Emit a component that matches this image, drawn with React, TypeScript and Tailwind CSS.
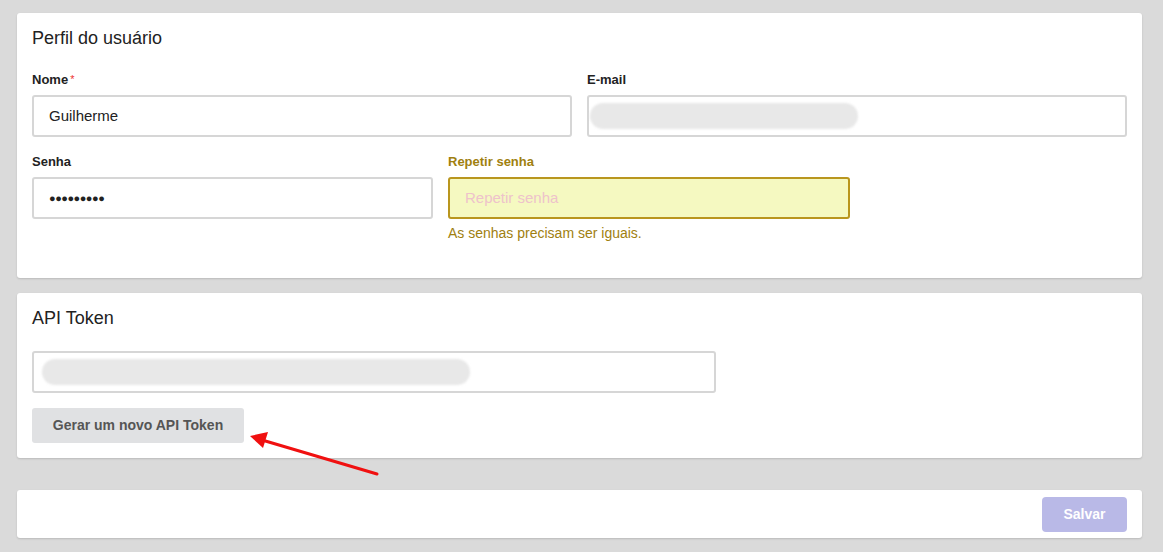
import React from 'react'

const font = { fontFamily: '"Liberation Sans", Arial, sans-serif' }

function Label({ children, required, warn }: { children: React.ReactNode; required?: boolean; warn?: boolean }) {
  return (
    <div className={`h-4 text-[13px] leading-4 font-bold mb-[7px] ${warn ? 'text-[#a0800f]' : 'text-[#222]'}`}>
      {children}
      {required && <sup className="text-[#e33] font-normal text-[11px] ml-[2px] relative top-[-1px]">*</sup>}
    </div>
  )
}

function Blurred({ width }: { width: string }) {
  return (
    <div className={`h-full flex items-center ${width}`}>
      <div className="w-full h-[26px] rounded-full bg-[#e8e8e8] blur-[1px]" />
    </div>
  )
}

export default function App() {
  return (
    <div style={font} className="relative min-h-[552px] bg-[#dadada] pl-[17px] pr-[21px] pt-[13px] pb-[14px]">
      {/* Perfil */}
      <section className="bg-white rounded-[3px] shadow-[0_1px_2px_rgba(0,0,0,0.15)] px-[15px] pt-[14px] pb-[37px]">
        <h2 className="text-[18px] leading-[22px] text-[#222]">Perfil do usuário</h2>
        <div className="grid grid-cols-2 gap-[15px] mt-[23px]">
          <div>
            <Label required>Nome</Label>
            <div className="h-[42px] border-2 border-[#d6d6d6] rounded-[3px] px-[15px] flex items-center text-[15px] text-[#222]">
              Guilherme
            </div>
          </div>
          <div>
            <Label>E-mail</Label>
            <div className="h-[42px] border-2 border-[#d6d6d6] rounded-[3px] px-[1px] py-[3px]">
              <Blurred width="w-[268px]" />
            </div>
          </div>
        </div>
        <div className="grid grid-cols-[401px_402px] gap-[15px] mt-[17px]">
          <div>
            <Label>Senha</Label>
            <div className="h-[42px] border-2 border-[#d6d6d6] rounded-[3px] px-[15px] flex items-center text-[11px] tracking-[-0.5px] text-[#222]">
              ●●●●●●●●●
            </div>
          </div>
          <div>
            <Label warn>Repetir senha</Label>
            <div className="h-[42px] border-2 border-[#b9961e] bg-[#f5f9c1] rounded-[3px] px-[15px] flex items-center text-[15px] text-[#eec2cb]">
              Repetir senha
            </div>
            <p className="mt-[6px] text-[14px] leading-4 text-[#a0800f]">As senhas precisam ser iguais.</p>
          </div>
        </div>
      </section>

      {/* API Token */}
      <section className="mt-[15px] bg-white rounded-[3px] shadow-[0_1px_2px_rgba(0,0,0,0.15)] px-[15px] pt-[14px] pb-[15px]">
        <h2 className="text-[18px] leading-[22px] text-[#222]">API Token</h2>
        <div className="mt-[22px] w-[684px] h-[42px] border-2 border-[#d6d6d6] rounded-[3px] pl-[8px] py-[4px]">
          <Blurred width="w-[428px]" />
        </div>
        <button className="mt-[15px] h-[35px] w-[212px] bg-[#e0e1e3] rounded-[3px] text-[14px] font-bold text-[#555]">
          Gerar um novo API Token
        </button>
      </section>

      {/* Footer */}
      <section className="mt-[32px] bg-white rounded-[3px] shadow-[0_1px_2px_rgba(0,0,0,0.15)] h-[48px] flex items-center justify-end pr-[15px]">
        <button className="h-[35px] w-[85px] bg-[#b9b9e7] rounded-[4px] text-[14px] font-bold text-white">Salvar</button>
      </section>

      {/* annotation arrow */}
      <svg className="absolute left-0 top-0 pointer-events-none" width="1163" height="552">
        <line x1="377" y1="474" x2="262" y2="440" stroke="#f01010" strokeWidth="3" strokeLinecap="round" />
        <polygon points="250,436 268,432 263,448" fill="#f01010" />
      </svg>
    </div>
  )
}
